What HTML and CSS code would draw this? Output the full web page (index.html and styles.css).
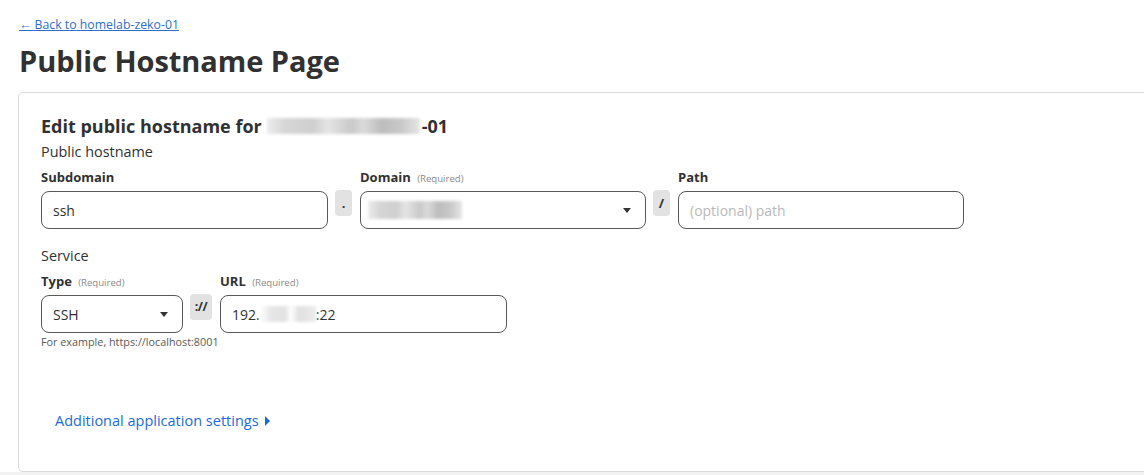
FILE: index.html
```html
<!DOCTYPE html>
<html lang="en">
<head>
<meta charset="utf-8">
<title>Public Hostname Page</title>
<link rel="stylesheet" href="styles.css">
</head>
<body>
<div class="page">
  <a class="back" href="#">← Back to homelab-zeko-01</a>
  <h1 class="title">Public Hostname Page</h1>
  <section class="card">
    <h2 class="card-title">Edit public hostname for <span class="redact redact-title"></span>-01</h2>
    <div class="group-label">Public hostname</div>
    <div class="row">
      <div class="field w-sub">
        <label class="label">Subdomain</label>
        <div class="input"><span class="value">ssh</span></div>
      </div>
      <div class="sep"><span class="sep-box">.</span></div>
      <div class="field w-dom">
        <label class="label">Domain <span class="req">(Required)</span></label>
        <div class="input select"><span class="redact redact-dom"></span><span class="caret"></span></div>
      </div>
      <div class="sep"><span class="sep-box">/</span></div>
      <div class="field w-path">
        <label class="label">Path</label>
        <div class="input"><span class="placeholder">(optional) path</span></div>
      </div>
    </div>

    <div class="group-label service">Service</div>
    <div class="row">
      <div class="field w-type">
        <label class="label">Type <span class="req">(Required)</span></label>
        <div class="input select"><span class="value">SSH</span><span class="caret"></span></div>
        <div class="help">For example, https://localhost:8001</div>
      </div>
      <div class="sep"><span class="sep-box wide">://</span></div>
      <div class="field w-url">
        <label class="label">URL <span class="req">(Required)</span></label>
        <div class="input"><span class="value">192.<span class="redact redact-url"></span>:22</span></div>
      </div>
    </div>

    <a class="more" href="#">Additional application settings <span class="tri"></span></a>
  </section>
  <div class="footer-strip"></div>
</div>
</body>
</html>
```

FILE: styles.css
```css
* { box-sizing: border-box; }
html, body { margin: 0; padding: 0; background: #fff; overflow: hidden; }
body {
  font-family: "Open Sans", "Noto Sans", sans-serif;
  color: #313131;
  width: 1144px;
  height: 475px;
}
.page { padding-top: 12px; }
.back {
  display: inline-block;
  margin-left: 19px;
  font-size: 12.3px;
  line-height: 17px;
  color: #2c6ecb;
  text-decoration: underline;
}
.title {
  margin: 7px 0 0 19px;
  font-size: 29px;
  line-height: 40px;
  font-weight: 700;
  color: #313131;
  letter-spacing: -0.05px;
}
.card {
  margin: 11px -20px 0 18px;
  border: 1px solid #d9d9d9;
  border-radius: 5px;
  padding: 21px 22px 0 22px;
  height: 380px;
  background: #fff;
}
.card-title {
  margin: 0;
  font-size: 18px;
  line-height: 24px;
  font-weight: 700;
  display: flex;
  align-items: center;
}
.redact {
  display: inline-block;
  background: linear-gradient(90deg, #ececec 0%, #d6d6d6 12%, #cfcfcf 30%, #e4e4e4 40%, #c9c9c9 55%, #dadada 63%, #bdbdbd 75%, #c9c9c9 88%, #e6e6e6 100%);
  filter: blur(1.5px);
}
.redact-title { width: 153px; height: 16px; margin: 0 2px 0 5px; }
.redact-dom { width: 94px; height: 18px; margin-left: -4px; }
.redact-url { width: 56px; height: 16px; vertical-align: -3px; background: linear-gradient(90deg, #fff 0%, #e6e6e6 20%, #e2e2e2 45%, #fff 55%, #e0e0e0 70%, #ececec 100%); }
.group-label {
  margin-top: 4px;
  font-size: 14.4px;
  line-height: 20px;
  color: #313131;
}
.group-label.service { margin-top: 17px; }
.row { display: flex; align-items: flex-start; }
.field { display: flex; flex-direction: column; }
.w-sub { width: 287px; }
.w-dom { width: 286px; }
.w-path { width: 286px; }
.w-type { width: 142px; }
.w-url { width: 287px; }
.label {
  margin-top: 6px;
  font-size: 13px;
  line-height: 18px;
  font-weight: 700;
  color: #313131;
  height: 18px;
}
.req {
  font-size: 9.6px;
  font-weight: 400;
  color: #8a8a8a;
  margin-left: 3px;
}
.input {
  margin-top: 5px;
  height: 38px;
  border: 1px solid #595959;
  border-radius: 8px;
  display: flex;
  align-items: center;
  padding: 0 11px;
  font-size: 14px;
  color: #313131;
  background: #fff;
}
.select { justify-content: space-between; padding-right: 14px; }
.caret {
  width: 0; height: 0;
  border-left: 4px solid transparent;
  border-right: 4px solid transparent;
  border-top: 5px solid #333;
}
.placeholder { color: #b9b9b9; }
.value { display: inline-flex; align-items: center; }
.sep {
  padding: 0 8px 0 7px;
  margin-top: 28px;
}
.sep-box {
  display: block;
  width: 17px;
  height: 26px;
  background: #e2e2e2;
  border-radius: 4px;
  font-size: 13px;
  font-weight: 700;
  line-height: 26px;
  text-align: center;
  color: #333;
}
.sep-box.wide { width: 22px; font-size: 12.5px; letter-spacing: -0.5px; }
.help {
  margin-top: 2px;
  font-size: 10.8px;
  line-height: 14px;
  color: #595959;
  white-space: nowrap;
}
.more {
  display: inline-block;
  margin: 62px 0 0 14px;
  font-size: 14.5px;
  line-height: 20px;
  color: #1a6bd8;
  text-decoration: none;
}
.tri {
  display: inline-block;
  width: 0; height: 0;
  border-top: 5px solid transparent;
  border-bottom: 5px solid transparent;
  border-left: 5px solid #1a6bd8;
  margin-left: 3px;
  vertical-align: 0;
}
.footer-strip {
  height: 10px;
  background: #f2f2f2;
}
```
